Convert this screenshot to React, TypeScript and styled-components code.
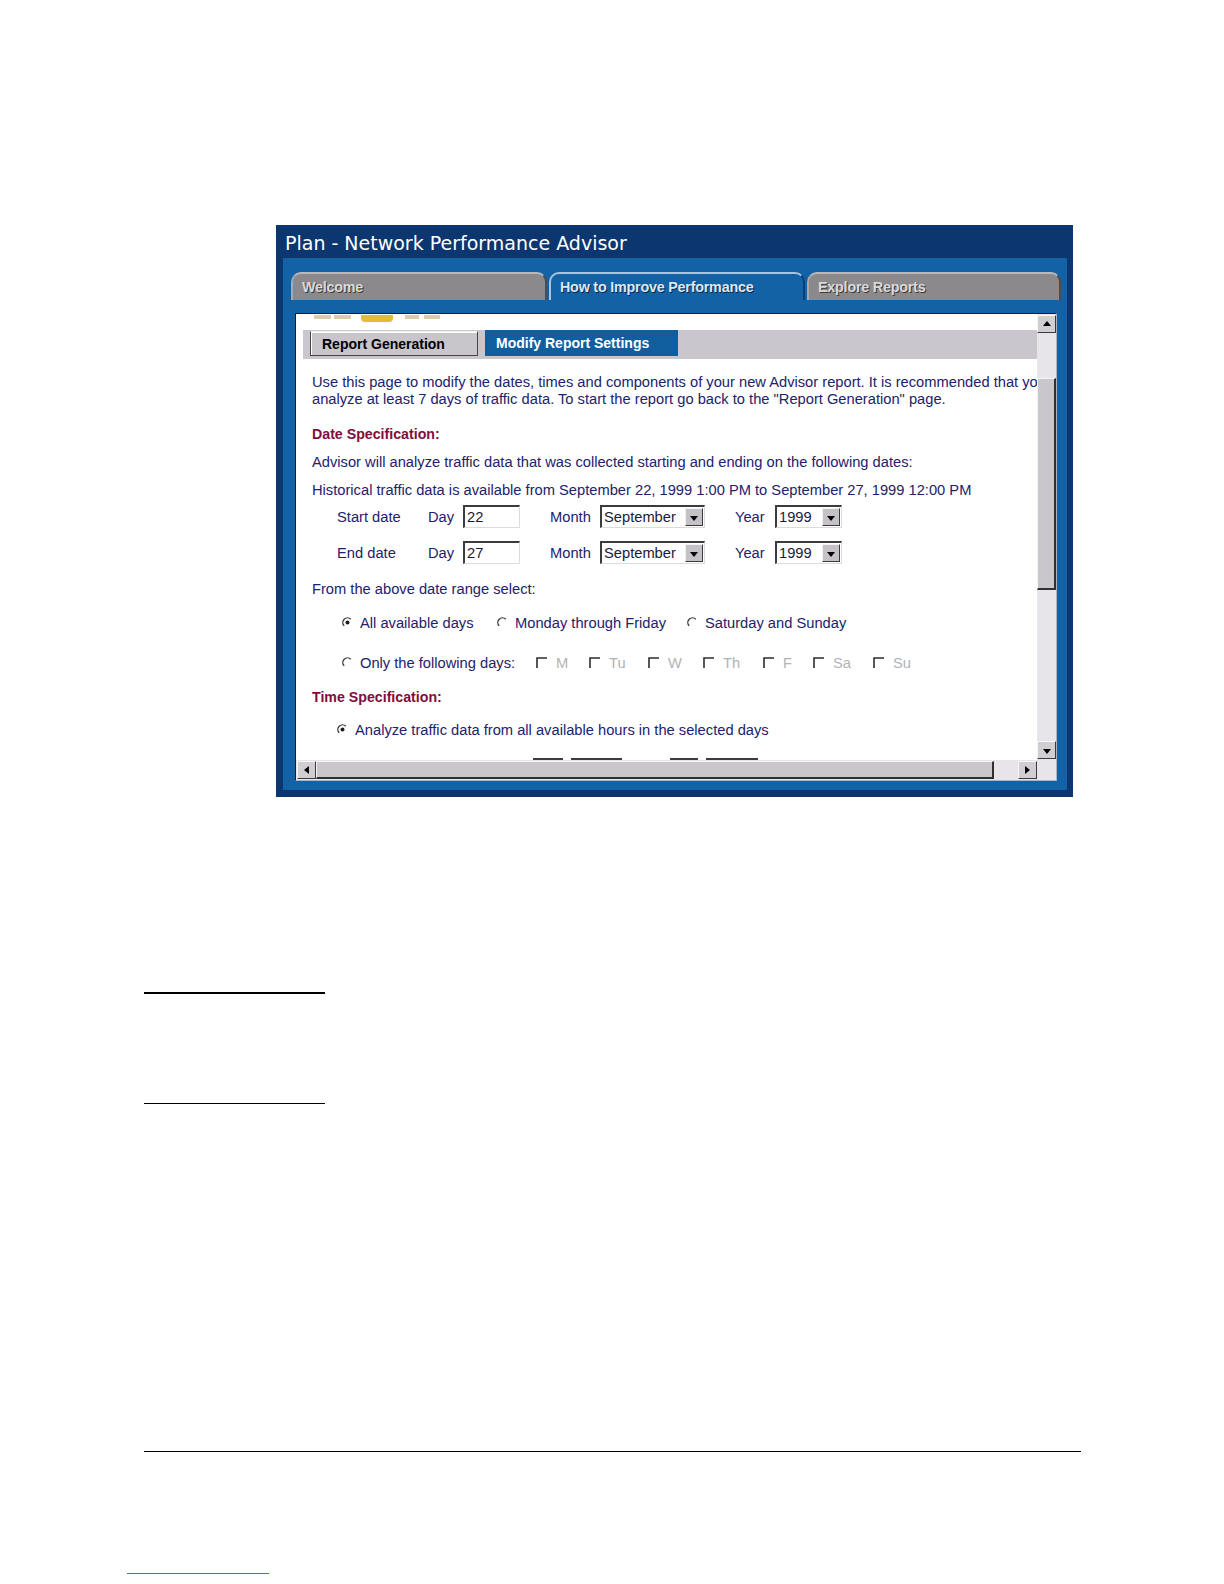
import React from "react";
import styled, { createGlobalStyle } from "styled-components";

const Global = createGlobalStyle`
  html, body { margin: 0; padding: 0; background: #ffffff; }
  body { width: 1224px; font-family: "Liberation Sans", Arial, sans-serif; }
  #root { width: 1224px; }
`;

const Page = styled.div`
  display: flex;
  flex-direction: column;
  align-items: flex-start;
  padding-top: 225px;
  width: 1224px;
  min-height: 1584px;
  box-sizing: border-box;
`;

const Window = styled.section`
  margin-left: 276px;
  width: 797px;
  box-sizing: border-box;
  background: #0c3670;
  padding: 0 6px 7px 7px;
  display: flex;
  flex-direction: column;
`;

const TitleBar = styled.div`
  height: 33px;
  box-sizing: border-box;
  padding: 3px 0 0 2px;
  display: flex;
  align-items: center;
  color: #ffffff;
  font-family: "DejaVu Sans", Verdana, sans-serif;
  font-size: 19px;
  white-space: nowrap;
`;

const WindowBody = styled.div`
  background: #1462a6;
  padding: 14px 0 9px 8px;
  display: flex;
  flex-direction: column;
`;

const TabStrip = styled.div`
  display: grid;
  grid-template-columns: 256px 256px 254px;
  column-gap: 2px;
  height: 28px;
`;

const Tab = styled.div<{ $active?: boolean }>`
  box-sizing: border-box;
  height: 28px;
  border-radius: 10px 10px 0 0;
  padding: 0 0 0 9px;
  display: flex;
  align-items: center;
  font-weight: bold;
  font-size: 14.3px;
  letter-spacing: -0.2px;
  white-space: nowrap;
  background: ${(p) => (p.$active ? "#1462a6" : "#8b898c")};
  border-top: 2px solid ${(p) => (p.$active ? "#a8c4e0" : "#b9b8ba")};
  border-left: 2px solid ${(p) => (p.$active ? "#a8c4e0" : "#a9a8aa")};
  border-right: 2px solid ${(p) => (p.$active ? "#0b3f78" : "#4d4c4e")};
  color: ${(p) => (p.$active ? "#dfe7f1" : "#d9d9d9")};
  text-shadow: 1px 1px 0 ${(p) => (p.$active ? "#06284e" : "#3b3b3b")};
`;

const Panel = styled.div`
  margin: 13px 0 0 4px;
  width: 762px;
  height: 468px;
  box-sizing: border-box;
  border: 1px solid #1b1b1b;
  border-right-color: #a7b5c6;
  border-bottom-color: #a7b5c6;
  background: #ffffff;
  display: grid;
  grid-template-columns: 741px 19px;
  grid-template-rows: 446px 20px;
`;

const Content = styled.div`
  overflow: hidden;
  display: flex;
  flex-direction: column;
  color: #22226c;
  font-size: 14.7px;
  white-space: nowrap;
`;

const DecoRow = styled.div`
  display: flex;
  align-items: flex-start;
  height: 8px;
  padding: 1px 0 0 18px;
  box-sizing: border-box;
`;

const DecoBar = styled.span<{ $w: number; $ml: number; $hi?: boolean }>`
  width: ${(p) => p.$w}px;
  margin-left: ${(p) => p.$ml}px;
  height: ${(p) => (p.$hi ? 7 : 4)}px;
  background: ${(p) => (p.$hi ? "#e5bb3a" : "#d6cdb9")};
  border-radius: ${(p) => (p.$hi ? "0 0 4px 4px" : "0")};
`;

const SubBar = styled.div`
  margin: 8px 0 0 7px;
  height: 31px;
  background: #c9c6cd;
  display: flex;
  align-items: flex-end;
  padding: 0 0 3px 7px;
  box-sizing: border-box;
  gap: 7px;
`;

const SubTab = styled.div<{ $active?: boolean; $w: number }>`
  width: ${(p) => p.$w}px;
  height: ${(p) => (p.$active ? 26 : 25)}px;
  box-sizing: border-box;
  display: flex;
  align-items: center;
  padding-left: 11px;
  font-weight: bold;
  font-size: 14px;
  color: ${(p) => (p.$active ? "#ffffff" : "#000000")};
  background: ${(p) => (p.$active ? "#115e9f" : "#c8c5cb")};
  border: ${(p) => (p.$active ? "none" : "1px solid #454545")};
  border-top-color: ${(p) => (p.$active ? "transparent" : "#f4f4f4")};
  box-shadow: ${(p) => (p.$active ? "none" : "inset 1px 1px 0 #ffffff")};
`;

const Form = styled.div`
  padding-left: 16px;
  display: flex;
  flex-direction: column;
`;

const Line = styled.div<{ $mt: number }>`
  margin-top: ${(p) => p.$mt}px;
  line-height: 17px;
`;

const Heading = styled(Line)`
  color: #7e0f3d;
  font-weight: bold;
  font-size: 14.2px;
`;

const DateRow = styled.div<{ $mt: number }>`
  margin-top: ${(p) => p.$mt}px;
  padding-left: 25px;
  display: grid;
  grid-template-columns: 91px 35px 87px 50px 135px 40px 67px;
  align-items: center;
  height: 23px;
`;

const TextBox = styled.div<{ $w: number }>`
  width: ${(p) => p.$w}px;
  height: 23px;
  box-sizing: border-box;
  border-style: solid;
  border-width: 2px 1px 1px 2px;
  border-color: #3c3c3c #dcdcdc #dcdcdc #3c3c3c;
  background: #ffffff;
  padding-left: 2px;
  display: flex;
  align-items: center;
  color: #1a1a3a;
`;

const SelectBox = styled(TextBox)`
  justify-content: space-between;
  padding-right: 1px;
`;

const DropButton = styled.span`
  width: 18px;
  height: 18px;
  box-sizing: border-box;
  background: #c4c2c6;
  border: 1px solid #3a3a3a;
  border-top-color: #f2f2f2;
  border-left-color: #f2f2f2;
  display: flex;
  align-items: center;
  justify-content: center;
`;

const Arrow = styled.span<{ $dir: "up" | "down" | "left" | "right" }>`
  width: 0;
  height: 0;
  border: 4px solid transparent;
  ${(p) =>
    p.$dir === "down"
      ? "border-top: 5px solid #000; border-bottom-width: 0; margin-top: 2px;"
      : p.$dir === "up"
      ? "border-bottom: 5px solid #000; border-top-width: 0; margin-bottom: 2px;"
      : p.$dir === "left"
      ? "border-right: 5px solid #000; border-left-width: 0;"
      : "border-left: 5px solid #000; border-right-width: 0;"}
`;

const OptionRow = styled.div<{ $mt: number; $indent: number }>`
  margin-top: ${(p) => p.$mt}px;
  padding-left: ${(p) => p.$indent}px;
  display: flex;
  align-items: center;
  height: 17px;
`;

const Option = styled.span<{ $w?: number; $disabled?: boolean; $gap?: number }>`
  display: inline-flex;
  align-items: center;
  gap: ${(p) => p.$gap ?? 7}px;
  width: ${(p) => (p.$w ? `${p.$w}px` : "auto")};
  flex-shrink: 0;
  color: ${(p) => (p.$disabled ? "#b3b3b3" : "inherit")};
`;

const CutRow = styled.div`
  margin-top: 20px;
  display: flex;
  height: 20px;
`;

const CutBox = styled.span<{ $ml: number; $w: number }>`
  margin-left: ${(p) => p.$ml}px;
  width: ${(p) => p.$w}px;
  height: 20px;
  box-sizing: border-box;
  border-top: 2px solid #3c3c3c;
  border-left: 2px solid #3c3c3c;
`;

const VScroll = styled.div`
  background: #e7e4ea;
  display: flex;
  flex-direction: column;
  padding: 1px 0 1px 0;
  box-sizing: border-box;
`;

const ScrollButton = styled.span`
  width: 19px;
  height: 18px;
  flex-shrink: 0;
  box-sizing: border-box;
  background: #d0cdd3;
  border: 1px solid #3a3a3a;
  border-top-color: #f7f7f7;
  border-left-color: #f7f7f7;
  display: flex;
  align-items: center;
  justify-content: center;
`;

const VThumb = styled.span<{ $top: number; $h: number }>`
  margin-top: ${(p) => p.$top}px;
  height: ${(p) => p.$h}px;
  box-sizing: border-box;
  background: #c9c6cc;
  border-top: 1px solid #f5f5f5;
  border-left: 1px solid #f5f5f5;
  border-right: 2px solid #2f2f2f;
  border-bottom: 2px solid #2f2f2f;
`;

const PushEnd = styled.span`
  margin-top: auto;
`;

const HScroll = styled.div`
  background: #e7e4ea;
  display: flex;
  align-items: center;
  padding-left: 1px;
`;

const HThumb = styled.span<{ $w: number }>`
  width: ${(p) => p.$w}px;
  height: 18px;
  box-sizing: border-box;
  background: #c9c6cc;
  border-top: 1px solid #f5f5f5;
  border-left: 1px solid #f5f5f5;
  border-right: 2px solid #2f2f2f;
  border-bottom: 2px solid #2f2f2f;
`;

const HEnd = styled.span`
  margin-left: auto;
  display: flex;
`;

const Corner = styled.div`
  background: #e7e4ea;
`;

const Rule = styled.hr<{ $mt: number; $ml: number; $w: number; $h: number; $color?: string }>`
  margin: ${(p) => p.$mt}px 0 0 ${(p) => p.$ml}px;
  width: ${(p) => p.$w}px;
  height: ${(p) => p.$h}px;
  border: 0;
  padding: 0;
  background: ${(p) => p.$color ?? "#000000"};
`;

const RadioMark = ({ checked }: { checked?: boolean }) => (
  <svg width="11" height="11" viewBox="0 0 11 11" style={{ flexShrink: 0 }}>
    <path d="M2.2 8.8 A4.6 4.6 0 0 1 8.8 2.2" fill="none" stroke="#3a3a3a" strokeWidth="1.4" />
    {checked && <circle cx="5.5" cy="5.5" r="2" fill="#1c1c1c" />}
  </svg>
);

const CheckMark = () => (
  <svg width="11" height="11" viewBox="0 0 11 11" style={{ flexShrink: 0 }}>
    <path d="M1 11 V1 H11" fill="none" stroke="#2e2e2e" strokeWidth="1.6" />
  </svg>
);

const days: [string, number | undefined][] = [
  ["M", 53],
  ["Tu", 59],
  ["W", 55],
  ["Th", 60],
  ["F", 50],
  ["Sa", 60],
  ["Su", undefined],
];

const DateFields = ({ label, day, mt }: { label: string; day: string; mt: number }) => (
  <DateRow $mt={mt}>
    <span>{label}</span>
    <span>Day</span>
    <TextBox $w={57}>{day}</TextBox>
    <span>Month</span>
    <SelectBox $w={105}>
      <span>September</span>
      <DropButton>
        <Arrow $dir="down" />
      </DropButton>
    </SelectBox>
    <span>Year</span>
    <SelectBox $w={67}>
      <span>1999</span>
      <DropButton>
        <Arrow $dir="down" />
      </DropButton>
    </SelectBox>
  </DateRow>
);

export default function App() {
  return (
    <>
      <Global />
      <Page>
        <Window>
          <TitleBar>Plan - Network Performance Advisor</TitleBar>
          <WindowBody>
            <TabStrip>
              <Tab>Welcome</Tab>
              <Tab $active>How to Improve Performance</Tab>
              <Tab>Explore Reports</Tab>
            </TabStrip>
            <Panel>
              <Content>
                <DecoRow>
                  <DecoBar $w={17} $ml={0} />
                  <DecoBar $w={17} $ml={3} />
                  <DecoBar $w={32} $ml={10} $hi />
                  <DecoBar $w={14} $ml={12} />
                  <DecoBar $w={16} $ml={5} />
                </DecoRow>
                <SubBar>
                  <SubTab $w={168}>Report Generation</SubTab>
                  <SubTab $w={193} $active>
                    Modify Report Settings
                  </SubTab>
                </SubBar>
                <Form>
                  <Line $mt={15}>
                    Use this page to modify the dates, times and components of your new Advisor report. It is recommended that you
                    <br />
                    analyze at least 7 days of traffic data. To start the report go back to the "Report Generation" page.
                  </Line>
                  <Heading $mt={18}>Date Specification:</Heading>
                  <Line $mt={11}>Advisor will analyze traffic data that was collected starting and ending on the following dates:</Line>
                  <Line $mt={11}>
                    Historical traffic data is available from September 22, 1999 1:00 PM to September 27, 1999 12:00 PM
                  </Line>
                  <DateFields label="Start date" day="22" mt={6} />
                  <DateFields label="End date" day="27" mt={13} />
                  <Line $mt={17}>From the above date range select:</Line>
                  <OptionRow $mt={16} $indent={30}>
                    <Option $w={155}>
                      <RadioMark checked />
                      All available days
                    </Option>
                    <Option $w={190}>
                      <RadioMark />
                      Monday through Friday
                    </Option>
                    <Option>
                      <RadioMark />
                      Saturday and Sunday
                    </Option>
                  </OptionRow>
                  <OptionRow $mt={23} $indent={30}>
                    <Option $w={194}>
                      <RadioMark />
                      Only the following days:
                    </Option>
                    {days.map(([d, w]) => (
                      <Option key={d} $w={w} $disabled $gap={9}>
                        <CheckMark />
                        {d}
                      </Option>
                    ))}
                  </OptionRow>
                  <Heading $mt={18}>Time Specification:</Heading>
                  <OptionRow $mt={15} $indent={25}>
                    <Option>
                      <RadioMark checked />
                      Analyze traffic data from all available hours in the selected days
                    </Option>
                  </OptionRow>
                  <CutRow>
                    <CutBox $ml={221} $w={30} />
                    <CutBox $ml={8} $w={51} />
                    <CutBox $ml={48} $w={28} />
                    <CutBox $ml={8} $w={52} />
                  </CutRow>
                </Form>
              </Content>
              <VScroll>
                <ScrollButton>
                  <Arrow $dir="up" />
                </ScrollButton>
                <VThumb $top={45} $h={212} />
                <PushEnd />
                <ScrollButton>
                  <Arrow $dir="down" />
                </ScrollButton>
              </VScroll>
              <HScroll>
                <ScrollButton>
                  <Arrow $dir="left" />
                </ScrollButton>
                <HThumb $w={678} />
                <HEnd>
                  <ScrollButton>
                    <Arrow $dir="right" />
                  </ScrollButton>
                </HEnd>
              </HScroll>
              <Corner />
            </Panel>
          </WindowBody>
        </Window>
        <Rule $mt={195} $ml={144} $w={181} $h={2} />
        <Rule $mt={109} $ml={144} $w={181} $h={1} />
        <Rule $mt={347} $ml={144} $w={937} $h={1} />
        <Rule $mt={121} $ml={127} $w={142} $h={1} $color="#5566bb" />
      </Page>
    </>
  );
}
